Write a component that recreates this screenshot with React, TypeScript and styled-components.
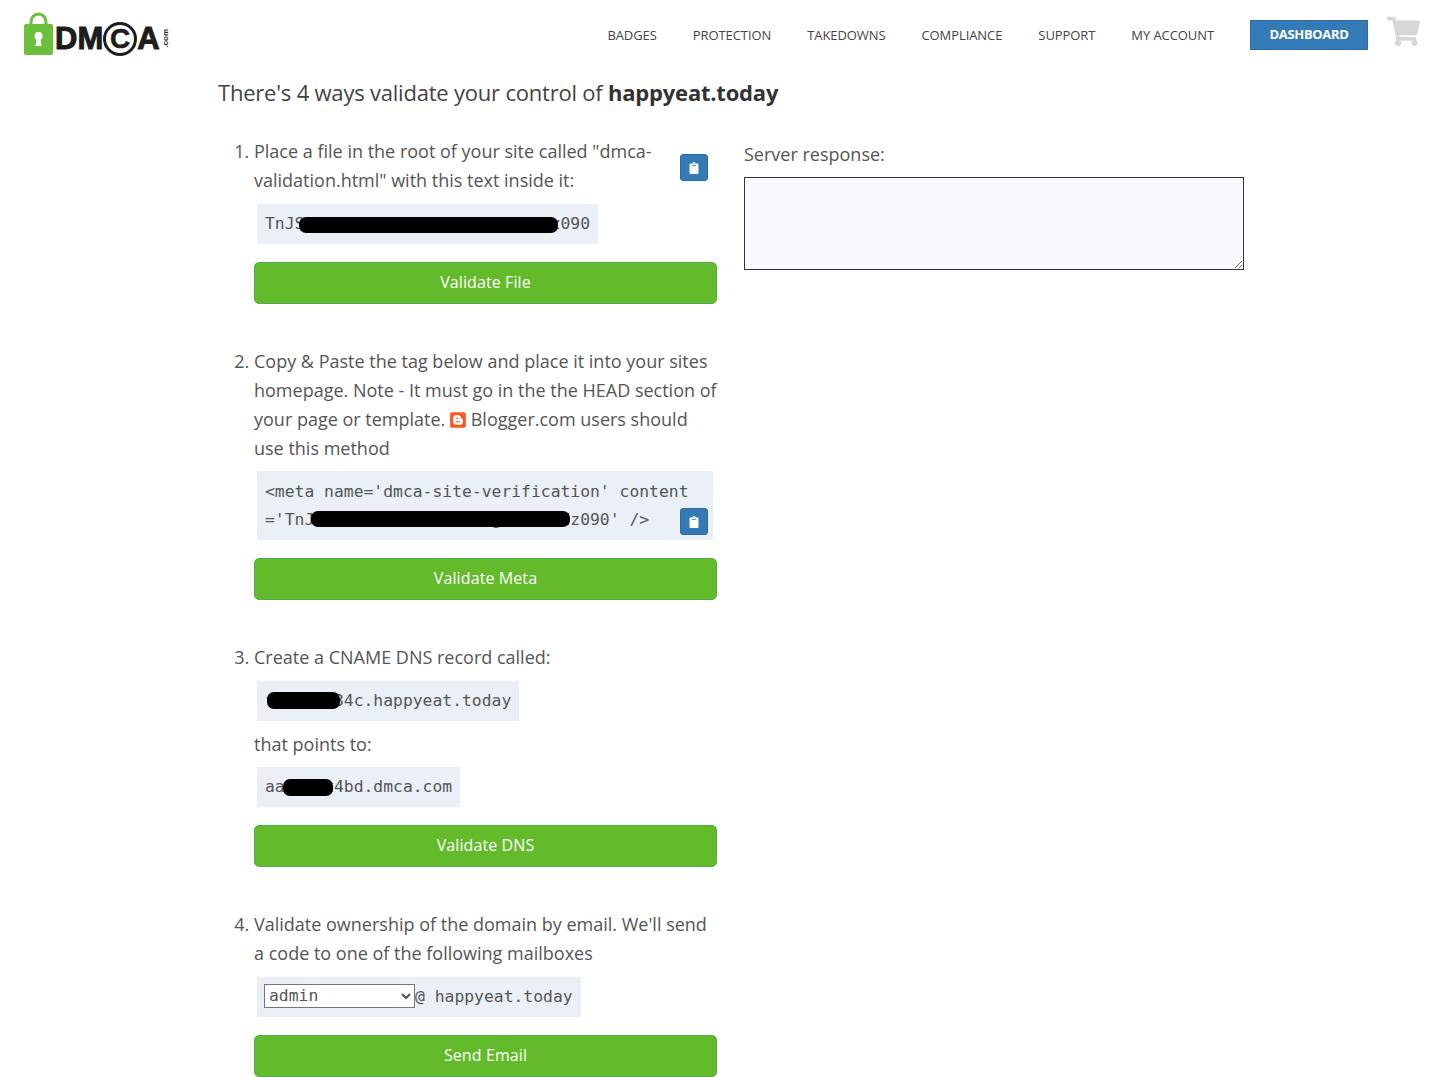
import React from 'react';
import styled, { createGlobalStyle } from 'styled-components';
import { FaBlogger, FaClipboard, FaShoppingCart } from 'react-icons/fa';

const NAV_ITEMS = ['Badges', 'Protection', 'Takedowns', 'Compliance', 'Support', 'My Account'];

const GlobalStyle = createGlobalStyle`
	html, body {
		margin: 0;
		background: #fff;
		overflow-x: hidden;
	}
	body {
		font-family: 'Open Sans', 'Liberation Sans', sans-serif;
		color: #555;
	}
`;

const LockIcon = () => (
	<svg width="30" height="43" viewBox="0 0 30 43" aria-hidden="true">
		<path d="M7 14V10a7.5 8 0 0 1 15 0v4" fill="none" stroke="#6cbf3c" strokeWidth="3" />
		<rect x="0" y="12" width="29" height="31" rx="2" fill="#6cbf3c" />
		<circle cx="14.5" cy="24" r="4" fill="#fff" />
		<path d="M12.8 25h3.4l1.3 9h-6z" fill="#fff" />
	</svg>
);

const ClipboardButton = ({ $floating }: { $floating?: boolean }) => (
	<CopyButton type="button" $floating={$floating} aria-label="Copy">
		<FaClipboard size={12} color="#fff" />
	</CopyButton>
);

export default function App() {
	return (
		<>
			<GlobalStyle />
			<Header>
				<Logo>
					<LockIcon />
					<LogoLetters>DM</LogoLetters>
					<LogoCircle>C</LogoCircle>
					<LogoLetters>A</LogoLetters>
					<LogoCom>.com</LogoCom>
				</Logo>
				<Nav>
					{NAV_ITEMS.map((item) => (
						<NavLink key={item}>{item}</NavLink>
					))}
					<DashboardButton>Dashboard</DashboardButton>
					<CartLink>
						<FaShoppingCart size={33} color="#d5d8d9" />
					</CartLink>
				</Nav>
			</Header>
			<Main>
				<Title>
					There's 4 ways validate your control of <strong>happyeat.today</strong>
				</Title>
				<Columns>
					<Steps>
						<Step>
							<IntroRow>
								<StepText>
									Place a file in the root of your site called "dmca-validation.html" with this
									text inside it:
								</StepText>
								<ClipboardButton />
							</IntroRow>
							<CodeBox>
								TnJSsxxxxxxxxxxsxxxxxhdlxxxtdz090
								<Redaction $left={42} $top={13} $width={259} $height={16} />
							</CodeBox>
							<ValidateButton type="button">Validate File</ValidateButton>
						</Step>
						<Step>
							<StepText>
								Copy &amp; Paste the tag below and place it into your sites homepage. Note - It must
								go in the the HEAD section of your page or template.{' '}
								<BloggerMark>
									<FaBlogger size={18} color="#ff5722" />
								</BloggerMark>{' '}
								Blogger.com users should use this method
							</StepText>
							<CodeBox $wide>
								&lt;meta name='dmca-site-verification' content
								<br />
								='TnJSsxxxxxxxxxxsxxxxxgxxxxxtdz090' /&gt;
								<Redaction $left={54} $top={40} $width={259} $height={16} />
								<ClipboardButton $floating />
							</CodeBox>
							<ValidateButton type="button">Validate Meta</ValidateButton>
						</Step>
						<Step>
							<StepText>Create a CNAME DNS record called:</StepText>
							<CodeBox>
								fxxxxxx34c.happyeat.today
								<Redaction $left={10} $top={11} $width={73} $height={17} />
							</CodeBox>
							<StepNote>that points to:</StepNote>
							<CodeBox $flush>
								aaxxxxx4bd.dmca.com
								<Redaction $left={26} $top={12} $width={50} $height={17} />
							</CodeBox>
							<ValidateButton type="button">Validate DNS</ValidateButton>
						</Step>
						<Step>
							<StepText>
								Validate ownership of the domain by email. We'll send a code to one of the following
								mailboxes
							</StepText>
							<CodeBox>
								<MailboxSelect defaultValue="admin">
									<option value="admin">admin</option>
								</MailboxSelect>
								@ happyeat.today
							</CodeBox>
							<ValidateButton type="button">Send Email</ValidateButton>
						</Step>
					</Steps>
					<ResponsePanel>
						<ResponseLabel>Server response:</ResponseLabel>
						<ResponseArea readOnly />
					</ResponsePanel>
				</Columns>
			</Main>
		</>
	);
}

const Header = styled.header`
	display: flex;
	justify-content: space-between;
	align-items: flex-start;
	height: 70px;
	padding: 0 28px 0 24px;
`;
const Logo = styled.a`
	display: flex;
	align-items: center;
	height: 44px;
	margin-top: 11px;
	color: #1d1d1b;
	font-family: 'Liberation Sans', Arial, sans-serif;
	font-weight: 700;
`;
const LogoLetters = styled.span`
	font-size: 31px;
	line-height: 1;
	margin-top: 10px;
	-webkit-text-stroke: 1px #1d1d1b;
	&:first-of-type {
		margin-left: 1px;
	}
`;
const LogoCircle = styled.span`
	display: flex;
	justify-content: center;
	align-items: center;
	flex: none;
	box-sizing: border-box;
	width: 34px;
	height: 34px;
	margin-top: 11px;
	border: 3px solid #1d1d1b;
	border-radius: 50%;
	font-size: 28px;
	line-height: 1;
	-webkit-text-stroke: 0.5px #1d1d1b;
`;
const LogoCom = styled.span`
	writing-mode: vertical-rl;
	transform: rotate(180deg);
	font-size: 8px;
	line-height: 7px;
	margin: 10px 0 0 2px;
`;
const Nav = styled.nav`
	display: flex;
	align-items: flex-start;
`;
const NavLink = styled.a`
	margin: 27px 36px 0 0;
	color: #444;
	font-size: 13px;
	line-height: 16px;
	text-transform: uppercase;
	letter-spacing: -0.08px;
`;
const DashboardButton = styled.a`
	display: flex;
	justify-content: center;
	align-items: center;
	box-sizing: border-box;
	width: 118px;
	height: 30px;
	margin-top: 20px;
	padding-bottom: 2px;
	background: #337ab7;
	border: 1px solid #2e6da4;
	color: #fff;
	font-size: 13px;
	font-weight: 700;
	letter-spacing: -0.35px;
	text-transform: uppercase;
`;
const CartLink = styled.a`
	display: flex;
	margin: 15px 0 0 19px;
`;
const Main = styled.main`
	width: 1030px;
	margin-left: 218px;
`;
const Title = styled.h1`
	margin: 0;
	height: 67px;
	color: #444;
	font-size: 22px;
	font-weight: 400;
	line-height: 44px;
	letter-spacing: -0.21px;
	strong {
		color: #333;
		font-weight: 700;
	}
`;
const Columns = styled.div`
	display: flex;
	align-items: flex-start;
	gap: 27px;
`;
const Steps = styled.ol`
	width: 463px;
	margin: 0;
	padding: 0 0 0 36px;
	font-size: 18px;
	line-height: 29px;
`;
const Step = styled.li`
	padding-bottom: 43px;
`;
const IntroRow = styled.div`
	display: flex;
	align-items: flex-start;
	gap: 10px;
	padding-right: 9px;
`;
const StepText = styled.div`
	flex: 1;
`;
const StepNote = styled.div`
	margin: -9px 0 8px;
`;
const BloggerMark = styled.span`
	display: inline-flex;
	vertical-align: -3px;
	svg {
		width: 16px;
	}
`;
const CodeBox = styled.code<{ $wide?: boolean; $flush?: boolean }>`
	position: relative;
	display: ${({ $wide }) => ($wide ? 'block' : 'table')};
	box-sizing: border-box;
	width: ${({ $wide }) => ($wide ? '456px' : 'auto')};
	margin: ${({ $flush, $wide }) => ($flush ? '0' : $wide ? '8px' : '9px')} 0 18px 3px;
	padding: ${({ $wide }) => ($wide ? '7px 8px 6px' : '6px 8px')};
	background: #eaf0f6;
	color: #555;
	font-family: 'DejaVu Sans Mono', 'Liberation Mono', monospace;
	font-size: 16.38px;
	line-height: 28px;
	white-space: nowrap;
`;
const Redaction = styled.span<{ $left: number; $top: number; $width: number; $height: number }>`
	position: absolute;
	left: ${({ $left }) => $left}px;
	top: ${({ $top }) => $top}px;
	width: ${({ $width }) => $width}px;
	height: ${({ $height }) => $height}px;
	background: #000;
	border-radius: 7px;
`;
const CopyButton = styled.button<{ $floating?: boolean }>`
	display: flex;
	flex: none;
	justify-content: center;
	align-items: center;
	box-sizing: border-box;
	width: 28px;
	height: 27px;
	margin-top: 17px;
	padding: 0;
	background: #337ab7;
	border: 1px solid #2e6da4;
	border-radius: 3px;
	${({ $floating }) =>
		$floating &&
		`
		position: absolute;
		right: 5px;
		top: 37px;
		margin: 0;
	`}
`;
const ValidateButton = styled.button`
	display: block;
	box-sizing: border-box;
	width: 100%;
	height: 42px;
	padding: 0 0 2px;
	background: #63bb2c;
	border: 1px solid #4cae4c;
	border-radius: 5px;
	color: #fff;
	font-family: 'Open Sans', 'Liberation Sans', sans-serif;
	font-size: 16px;
	letter-spacing: 0.1px;
`;
const MailboxSelect = styled.select`
	box-sizing: border-box;
	width: 151px;
	height: 24px;
	margin: 0 0 0 -1px;
	padding: 0;
	background: #fff;
	border: 1px solid #767676;
	border-radius: 0;
	color: #555;
	font-family: 'DejaVu Sans Mono', 'Liberation Mono', monospace;
	font-size: 16.38px;
	vertical-align: 1px;
`;
const ResponsePanel = styled.section`
	display: flex;
	flex-direction: column;
	width: 500px;
`;
const ResponseLabel = styled.label`
	font-size: 18px;
	line-height: 29px;
	margin: 3px 0 8px;
`;
const ResponseArea = styled.textarea`
	box-sizing: border-box;
	width: 500px;
	height: 93px;
	background: #f8faff;
	border: 1px solid #333;
	border-radius: 0;
	outline: none;
`;
